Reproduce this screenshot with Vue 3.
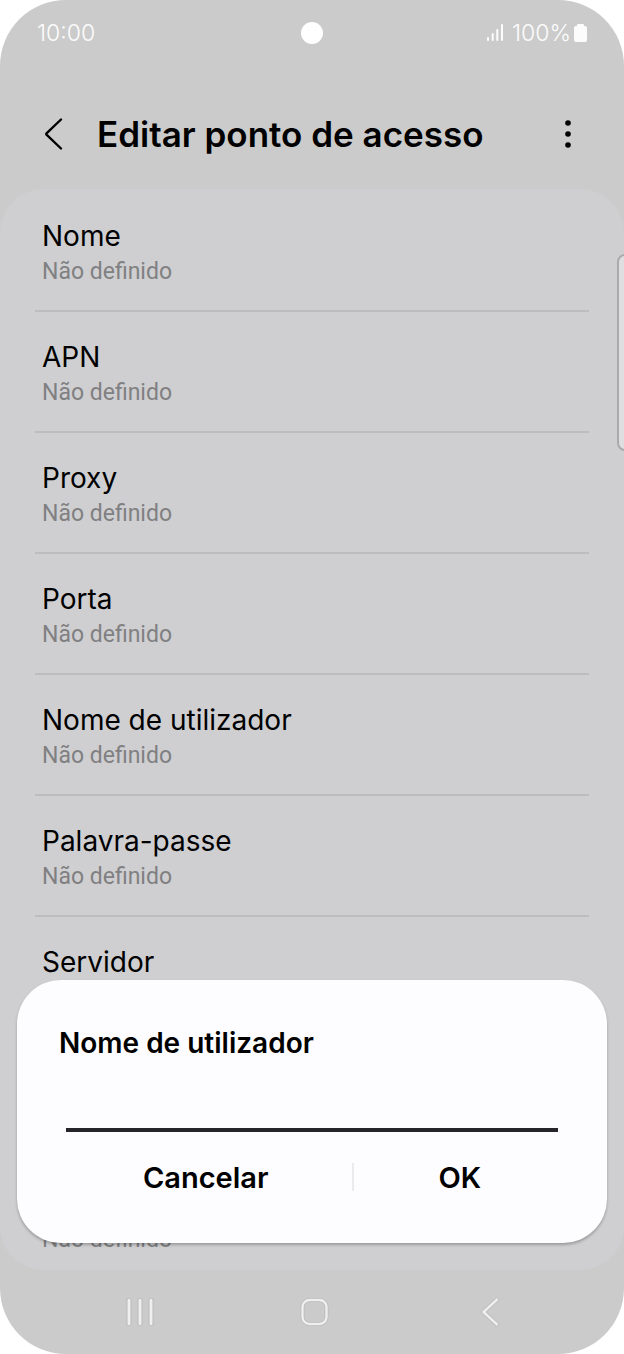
<script setup>
import { ref } from 'vue';

const UNSET = 'Não definido';

const fields = ref([
  { id: 'name', label: 'Nome', value: '' },
  { id: 'apn', label: 'APN', value: '' },
  { id: 'proxy', label: 'Proxy', value: '' },
  { id: 'port', label: 'Porta', value: '' },
  { id: 'user', label: 'Nome de utilizador', value: '' },
  { id: 'password', label: 'Palavra-passe', value: '' },
  { id: 'server', label: 'Servidor', value: '' },
  { id: 'mmsc', label: 'MMSC', value: '' },
  { id: 'mmsproxy', label: 'Proxy MMS', value: '' }
]);

const active = ref(fields.value[4]);
const draft = ref('');

const openField = (field) => {
  active.value = field;
  draft.value = field.value;
};

const closeDialog = () => {
  active.value = null;
};

const confirm = () => {
  active.value.value = draft.value;
  closeDialog();
};
</script>

<template>
  <div class="phone">
    <!-- status bar -->
    <div class="status-bar">
      <span class="clock">10:00</span>
      <span class="camera"></span>
      <div class="status-right">
        <svg class="signal" width="17" height="18" viewBox="0 0 17 18" fill="currentColor">
          <rect x="0" y="13" width="2" height="4" rx="1" />
          <rect x="4.700" y="9" width="2" height="8" rx="1" />
          <rect x="9.300" y="5" width="2" height="12" rx="1" />
          <rect x="14" y="0" width="2" height="17" rx="1" />
        </svg>
        <span>100%</span>
        <svg class="battery" width="13" height="19" viewBox="0 0 13 19" fill="currentColor">
          <path d="M4 0h5a1 1 0 0 1 1 1v1h1a2 2 0 0 1 2 2v12a2 2 0 0 1-2 2H2a2 2 0 0 1-2-2V4a2 2 0 0 1 2-2h1V1a1 1 0 0 1 1-1z" />
        </svg>
      </div>
    </div>

    <header class="app-bar">
      <button class="icon-btn" type="button" aria-label="Voltar">
        <svg width="20" height="34" viewBox="0 0 20 34" fill="none" stroke="currentColor" stroke-width="2.4" stroke-linecap="round" stroke-linejoin="round">
          <path d="M17 2.500 2.500 16.300a1 1 0 0 0 0 1.400L17 31.500" />
        </svg>
      </button>
      <h1>Editar ponto de acesso</h1>
      <button class="icon-btn" type="button" aria-label="Mais opções">
        <svg width="8" height="28" viewBox="0 0 8 28" fill="currentColor">
          <circle cx="4" cy="3" r="2.800" />
          <circle cx="4" cy="14" r="2.800" />
          <circle cx="4" cy="25" r="2.800" />
        </svg>
      </button>
    </header>

    <main class="card">
      <button
        v-for="field in fields"
        :key="field.id"
        class="row"
        type="button"
        @click="openField(field)"
      >
        <span class="row-label">{{ field.label }}</span>
        <span class="row-value">{{ field.value || UNSET }}</span>
      </button>
    </main>

    <span class="edge-handle"></span>

    <!-- edit dialog -->
    <form v-if="active" class="dialog" @submit.prevent="confirm">
      <label class="dialog-title" for="field-input">{{ active.label }}</label>
      <input id="field-input" v-model="draft" class="dialog-input" type="text" autocomplete="off" />
      <div class="dialog-actions">
        <button type="button" @click="closeDialog">Cancelar</button>
        <span class="divider"></span>
        <button type="submit">OK</button>
      </div>
    </form>

    <nav class="nav-bar">
      <button type="button" aria-label="Recentes">
        <svg width="30" height="32" viewBox="0 0 30 32" fill="#efefef" stroke="#b9b9b9" stroke-width="1">
          <rect x="2" y="2.500" width="4" height="27" rx="1.500" />
          <rect x="13" y="2.500" width="4" height="27" rx="1.500" />
          <rect x="24" y="2.500" width="4" height="27" rx="1.500" />
        </svg>
      </button>
      <button type="button" aria-label="Início">
        <svg width="32" height="32" viewBox="0 0 32 32" fill="none">
          <rect x="3.500" y="4" width="24" height="24" rx="7" stroke="#b9b9b9" stroke-width="4" />
          <rect x="3.500" y="4" width="24" height="24" rx="7" stroke="#efefef" stroke-width="2.400" />
        </svg>
      </button>
      <button type="button" aria-label="Anterior">
        <svg width="20" height="32" viewBox="0 0 20 32" fill="none" stroke-linecap="round">
          <path d="M17 3.500 3.500 16 17 28.500" stroke="#b9b9b9" stroke-width="4" />
          <path d="M17 3.500 3.500 16 17 28.500" stroke="#efefef" stroke-width="2.400" />
        </svg>
      </button>
    </nav>
  </div>
</template>

<style>
body {
  margin: 0;
  background: #ffffff;
}
</style>

<style scoped>
.phone {
  position: relative;
  display: flex;
  flex-direction: column;
  min-height: 100vh;
  overflow: hidden;
  border-radius: 66px;
  background: #cbcbcb;
  color: #000000;
  font-family: Inter, 'Liberation Sans', sans-serif;
}

button {
  margin: 0;
  padding: 0;
  border: none;
  background: none;
  color: inherit;
  font-family: inherit;
  cursor: pointer;
}

.status-bar {
  display: grid;
  grid-template-columns: 1fr auto 1fr;
  align-items: center;
  height: 66px;
  padding: 0 37px;
  color: #fcfcfc;
  font-size: 23px;
  font-weight: 300;
}

.camera {
  width: 22px;
  height: 22px;
  border-radius: 50%;
  background: #ffffff;
}

.status-right {
  display: flex;
  align-items: center;
  justify-content: flex-end;
}

.signal {
  margin-right: 8px;
}

.battery {
  margin-left: 3px;
}

.app-bar {
  display: flex;
  align-items: center;
  height: 123px;
  padding: 12px 46px 0 44px;
  box-sizing: border-box;
}

.app-bar h1 {
  flex: 1;
  margin: 0 0 0 33px;
  font-size: 35px;
  font-weight: 600;
  line-height: 42px;
}

.icon-btn {
  display: flex;
  justify-content: center;
  min-width: 20px;
}

.card {
  display: flex;
  flex-direction: column;
  padding: 2px 35px 0;
  border-radius: 44px;
  background: #cfcfd1;
}

.row {
  display: flex;
  flex-direction: column;
  align-items: flex-start;
  padding: 25px 7px 22px;
  border-bottom: 2px solid #bdbdbf;
  text-align: left;
}

.row:last-child {
  padding-bottom: 14px;
  border-bottom: none;
}

.row-label {
  font-size: 28px;
  line-height: 40px;
}

.row-value {
  color: #808082;
  font-family: Roboto, 'Liberation Sans', sans-serif;
  font-size: 23px;
  line-height: 32px;
}

.edge-handle {
  position: absolute;
  top: 254px;
  right: -12px;
  width: 15px;
  height: 193px;
  border: 2px solid #aaaaac;
  border-radius: 8px;
  background: #dedee0;
}

.dialog {
  position: absolute;
  right: 17px;
  bottom: 111px;
  left: 17px;
  display: flex;
  flex-direction: column;
  padding: 44px 42px 36px;
  border-radius: 44px;
  background: #fdfdff;
  box-shadow: 0 2px 3px rgba(0, 0, 0, 0.25);
}

.dialog-title {
  font-size: 28px;
  font-weight: 600;
  line-height: 38px;
}

.dialog-input {
  height: 70px;
  margin: 0 7px;
  padding: 20px 0 0;
  box-sizing: border-box;
  border: none;
  border-bottom: 4px solid #25252a;
  outline: none;
  background: transparent;
  color: inherit;
  font-family: inherit;
  font-size: 28px;
}

.dialog-actions {
  display: flex;
  align-items: center;
  margin-top: 15px;
}

.dialog-actions button {
  flex: 1 1 auto;
  height: 60px;
  font-size: 29px;
  font-weight: 600;
}

.divider {
  width: 2px;
  height: 28px;
  background: #ebebed;
}

.nav-bar {
  display: flex;
  align-items: center;
  height: 84px;
  padding: 0 47px 0 52px;
}

.nav-bar button {
  display: flex;
  flex: 1;
  justify-content: center;
}
</style>
